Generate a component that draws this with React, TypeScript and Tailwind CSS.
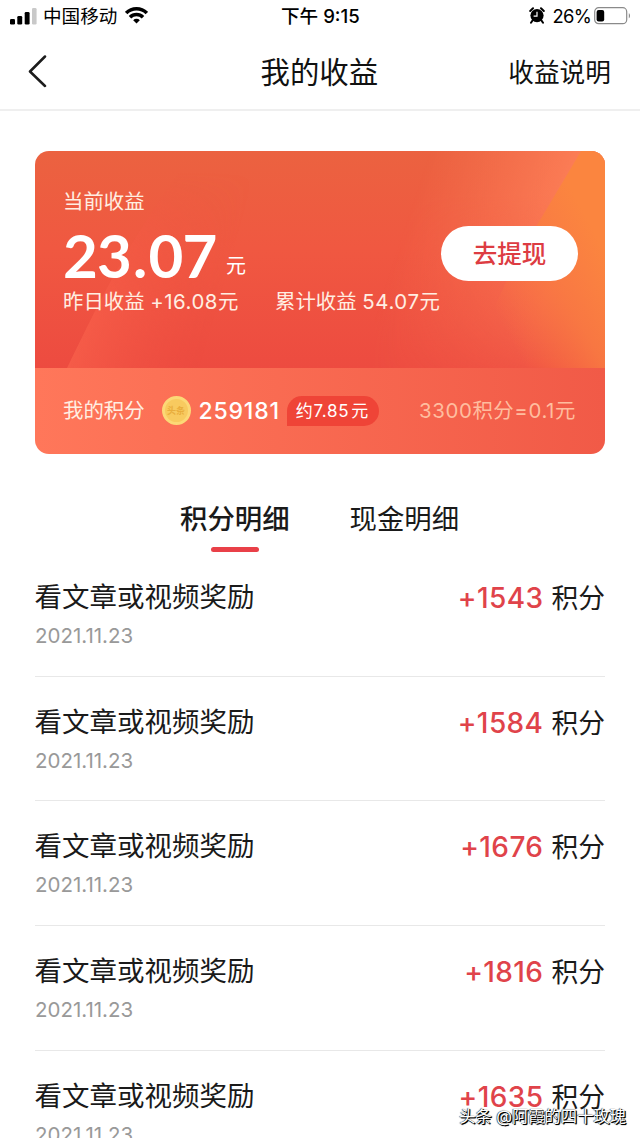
import React from 'react';

interface Reward {
    title: string;
    date: string;
    points: string;
}

const rewards: Reward[] = [
    { title: '看文章或视频奖励', date: '2021.11.23', points: '+1543' },
    { title: '看文章或视频奖励', date: '2021.11.23', points: '+1584' },
    { title: '看文章或视频奖励', date: '2021.11.23', points: '+1676' },
    { title: '看文章或视频奖励', date: '2021.11.23', points: '+1816' },
    { title: '看文章或视频奖励', date: '2021.11.23', points: '+1635' },
];

const StatusBar: React.FC = () => (
    <div className="relative flex h-8 items-center justify-between pl-[10px] pr-[8px] text-black">
        <div className="flex items-center">
            <svg width="27" height="17" viewBox="0 0 27 17">
                <rect x="0" y="11" width="5" height="5.5" rx="1.3" />
                <rect x="7.3" y="8" width="4.9" height="8.5" rx="1.3" />
                <rect x="14.7" y="4" width="4.9" height="12.5" rx="1.3" />
                <rect x="22" y="0" width="4.6" height="16.5" rx="1.3" fill="#c9c9c9" />
            </svg>
            <span className="ml-[6px] text-[18.6px] leading-8">中国移动</span>
            <svg className="ml-[8px] -mt-[2px]" width="23" height="17" viewBox="0 0 23 17" fill="none" stroke="#000" strokeWidth="3.5">
                <path d="M1.2 6.1a14.6 14.6 0 0 1 20.6 0" />
                <path d="M5 10.2a9.2 9.2 0 0 1 13 0" />
                <path d="M11.5 16.6 8.2 13.2a4.7 4.7 0 0 1 6.6 0z" fill="#000" stroke="none" />
            </svg>
        </div>
        <div className="absolute left-[281px] text-[18.6px] font-medium leading-8 whitespace-nowrap">下午 9:15</div>
        <div className="flex items-center">
            <svg className="-mt-px" width="16" height="17" viewBox="0 0 16 17">
                <circle cx="8" cy="8.6" r="6.6" />
                <path d="M1.2 4 4 1.3M14.8 4l-2.8-2.7M3.5 13.5l-1.5 2.2M12.5 13.5l1.5 2.2" stroke="#000" strokeWidth="2" strokeLinecap="round" />
                <path d="M8 4.8v4.3H4.6" stroke="#fff" strokeWidth="1.2" fill="none" />
            </svg>
            <span className="ml-[7px] mr-[1px] text-[18.4px] leading-8 tracking-[-0.7px]">26%</span>
            <svg className="ml-[2px] -mt-px" width="38" height="18" viewBox="0 0 38 18">
                <rect x="0.7" y="0.7" width="32" height="16" rx="4" fill="none" stroke="#8a8a8a" strokeWidth="1.2" />
                <rect x="2.6" y="2.9" width="7.6" height="11.6" rx="2" />
                <path d="M34.8 6.2c1.6.6 1.6 4.4 0 5z" fill="#8a8a8a" />
            </svg>
        </div>
    </div>
);

const Header: React.FC = () => (
    <header className="relative flex h-[79px] items-center justify-between border-b-2 border-[#efefef] pl-7 pr-[29px] pt-[3px] text-[#111]">
        <svg width="20" height="34" viewBox="0 0 20 34" fill="none" stroke="#1c1c1c" strokeWidth="2.5" strokeLinecap="round" strokeLinejoin="round">
            <path d="M17 1.5 2 16.5 17 31" />
        </svg>
        <h1 className="absolute left-[260.5px] pt-[1px] text-[29.4px] leading-[44px] whitespace-nowrap">我的收益</h1>
        <span className="pt-[2px] text-[25.7px] leading-[44px]">收益说明</span>
    </header>
);

const CardArt: React.FC = () => (
    <svg className="absolute inset-0" width="570" height="217" viewBox="0 0 570 217">
        <defs>
            <linearGradient id="base" x1="0" y1="0" x2="0" y2="1">
                <stop offset="0" stopColor="#eb6240" />
                <stop offset="0.45" stopColor="#f05841" />
                <stop offset="1" stopColor="#ed4b40" />
            </linearGradient>
            <linearGradient id="beam" gradientUnits="userSpaceOnUse" x1="45" y1="180" x2="165" y2="215">
                <stop offset="0" stopColor="#f75f4a" stopOpacity="0.8" />
                <stop offset="1" stopColor="#f05041" stopOpacity="0" />
            </linearGradient>
            <linearGradient id="beamFade" x1="0" y1="0" x2="0" y2="1">
                <stop offset="0.1" stopColor="#000" />
                <stop offset="0.75" stopColor="#fff" />
            </linearGradient>
            <mask id="beamMask">
                <rect width="570" height="217" fill="url(#beamFade)" />
            </mask>
            <linearGradient id="coral" gradientUnits="userSpaceOnUse" x1="375" y1="60" x2="525" y2="110">
                <stop offset="0" stopColor="#fb7b55" stopOpacity="0" />
                <stop offset="1" stopColor="#fd8058" />
            </linearGradient>
            <linearGradient id="coralFade" x1="0" y1="0" x2="0" y2="1">
                <stop offset="0.2" stopColor="#fff" />
                <stop offset="1" stopColor="#333" />
            </linearGradient>
            <mask id="coralMask">
                <rect width="570" height="217" fill="url(#coralFade)" />
            </mask>
            <linearGradient id="orange" gradientUnits="userSpaceOnUse" x1="460" y1="160" x2="570" y2="100">
                <stop offset="0" stopColor="#f9763f" stopOpacity="0" />
                <stop offset="0.55" stopColor="#f97b41" stopOpacity="0.85" />
                <stop offset="1" stopColor="#fb853f" />
            </linearGradient>
        </defs>
        <rect width="570" height="217" fill="url(#base)" />
        <path d="M32 217C65 150 92 90 160 0h110v217z" fill="url(#beam)" mask="url(#beamMask)" />
        <path d="M340 0h230v217H340z" fill="url(#coral)" mask="url(#coralMask)" />
        <path d="M546 0C525 36 503 72 484 105C465 141 450 180 430 217H570V0z" fill="url(#orange)" />
    </svg>
);

const Coin: React.FC = () => (
    <div className="ml-[17px] flex size-[29px] items-center justify-center rounded-full border-[3px] border-[#fcd876] bg-[#f8ca5f] text-[9px] font-bold leading-none text-[#e9ad3c]">
        头条
    </div>
);

const BalanceCard: React.FC = () => (
    <section className="mx-[35px] mt-[40px] h-[302.5px] overflow-hidden rounded-[14px] text-[#ffeee2]">
        <div className="relative h-[217px]">
            <CardArt />
            <div className="relative flex h-full items-start justify-between pl-7 pr-[27px]">
                <div className="pt-[36px] whitespace-nowrap">
                    <div className="text-[20.4px] leading-[30px]">当前收益</div>
                    <div className="flex h-[70px] items-start text-white">
                        <span className="w-[155px] font-['Lato',sans-serif] text-[60px] font-bold leading-[76px] tracking-[-0.8px]">
                            23<span className="mx-[2px]">.</span>07
                        </span>
                        <span className="ml-[8px] mt-[31px] text-[20px] leading-[36px]">元</span>
                    </div>
                    <div className="flex text-[20.4px] leading-[30px]">
                        <span className="w-[212px]">昨日收益 <span className="tracking-[0.5px]">+16.08</span>元</span>
                        <span>累计收益 <span className="tracking-[0.6px]">54.07</span>元</span>
                    </div>
                </div>
                <button className="mt-[75px] h-[55px] w-[137px] rounded-full bg-white text-[24.5px] font-medium leading-[57px] text-[#dd3c42]">
                    去提现
                </button>
            </div>
        </div>
        <div className="flex h-[85.5px] items-center bg-linear-to-r from-[#ff775a] to-[#f15a47] pl-7 pr-[29px] whitespace-nowrap">
            <span className="pt-[2px] text-[20.4px]">我的积分</span>
            <Coin />
            <span className="ml-[8px] text-[23px] font-medium tracking-[0.8px] text-white">259181</span>
            <span className="ml-[7px] h-[30px] w-[92px] rounded-[15px] rounded-bl-none bg-[#ef4437] pl-[9px] text-[17px] leading-[30px] tracking-[0.7px] text-white">约7.85<span className="ml-[2px]">元</span></span>
            <span className="ml-auto pt-[1px] text-[20.4px] tracking-[0.6px] text-[#ffbd9f]">3300积分=0.1元</span>
        </div>
    </section>
);

const Tabs: React.FC = () => (
    <nav className="mt-[44.5px] flex h-[55px] pl-[180px] text-[27.4px] leading-[42px] text-[#1a1a1a]">
        <div className="flex flex-col items-center font-medium">
            积分明细
            <span className="mt-[7px] h-[5px] w-12 rounded-full bg-[#e94048]" />
        </div>
        <div className="ml-[60px]">现金明细</div>
    </nav>
);

const RewardRow: React.FC<{ reward: Reward }> = ({ reward }) => (
    <li className="mx-[35px] flex h-[124.7px] shrink-0 justify-between border-b-[1.5px] border-[#e8e8e8] pt-[25px] text-[#1a1a1a]">
        <div>
            <div className="-ml-[0.5px] text-[27.5px] leading-[41px]">{reward.title}</div>
            <div className="mt-[3px] text-[20.5px] leading-[30px] text-[#999]">{reward.date}</div>
        </div>
        <div className="text-[26.8px] leading-[42px]">
            <span className="text-[28px] font-medium tracking-[0.4px] text-[#e0434a]">{reward.points}</span>
            <span className="ml-[8px]">积分</span>
        </div>
    </li>
);

const App: React.FC = () => (
    <div className="relative h-[1138px] w-[640px] overflow-hidden bg-white font-['Inter','Noto_Sans_CJK_SC',sans-serif]">
        <StatusBar />
        <Header />
        <BalanceCard />
        <Tabs />
        <ul className="-mt-[1px]">
            {rewards.map((reward, i) => (
                <RewardRow key={i} reward={reward} />
            ))}
        </ul>
        <div className="absolute right-[14px] bottom-[8px] text-[16.3px] leading-[28px] whitespace-nowrap text-white [text-shadow:1px_1px_1px_#000,1px_1px_0_#000,-0.5px_-0.5px_1px_#000]">
            头条 @阿霞的四十玫瑰
        </div>
    </div>
);

export default App;
